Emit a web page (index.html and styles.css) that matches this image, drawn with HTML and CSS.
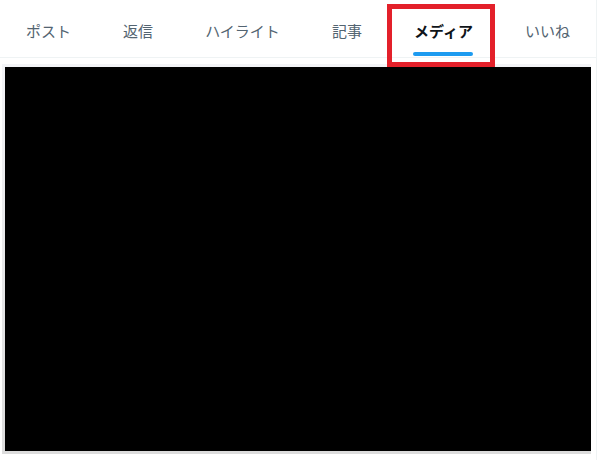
FILE: index.html
```html
<!DOCTYPE html>
<html lang="ja">
<head>
  <meta charset="UTF-8" />
  <meta name="viewport" content="width=device-width, initial-scale=1.0"/>
  <title>メディア</title>
  <link rel="stylesheet" href="styles.css">
</head>
<body>
  <div class="column">
    <!-- Profile tabs -->
    <nav class="tabs">
      <a class="tab">ポスト</a>
      <a class="tab">返信</a>
      <a class="tab">ハイライト</a>
      <a class="tab">記事</a>
      <a class="tab active">メディア<span class="marker"></span></a>
      <a class="tab">いいね</a>
    </nav>

    <!-- Media preview -->
    <div class="media">
      <div class="video"></div>
    </div>

    <div class="highlight"></div>
  </div>
</body>
</html>
```

FILE: styles.css
```css
body {
  margin: 0;
  background: #fff;
  font-family: "Noto Sans CJK JP", "Noto Sans", sans-serif;
}
.column {
  position: relative;
  width: 596px;
  height: 460px;
  border-right: 1px solid #eff3f4;
}
.tabs {
  display: flex;
  height: 58px;
  border-bottom: 1px solid #eff3f4;
  box-sizing: border-box;
}
.tab {
  position: relative;
  flex: 1 1 auto;
  display: flex;
  justify-content: center;
  padding: 21px 16px 0;
  font-size: 15px;
  line-height: 20px;
  color: #536471;
  white-space: nowrap;
}
.tab.active {
  color: #0f1419;
  font-weight: 700;
}
.marker {
  position: absolute;
  left: 50%;
  bottom: 1px;
  width: 60px;
  height: 4px;
  margin-left: -30px;
  border-radius: 2px;
  background: #1d9bf0;
}
.media {
  margin: 6px 5px 0 2px;
  padding: 3px 0 3px 3px;
  background: linear-gradient(#f3f4f7, #dcdcdc);
}
.video {
  height: 384px;
  background: #000;
}
.highlight {
  position: absolute;
  left: 387px;
  top: 4px;
  width: 108px;
  height: 63px;
  border: 5px solid #e3202a;
  box-sizing: border-box;
}
```
